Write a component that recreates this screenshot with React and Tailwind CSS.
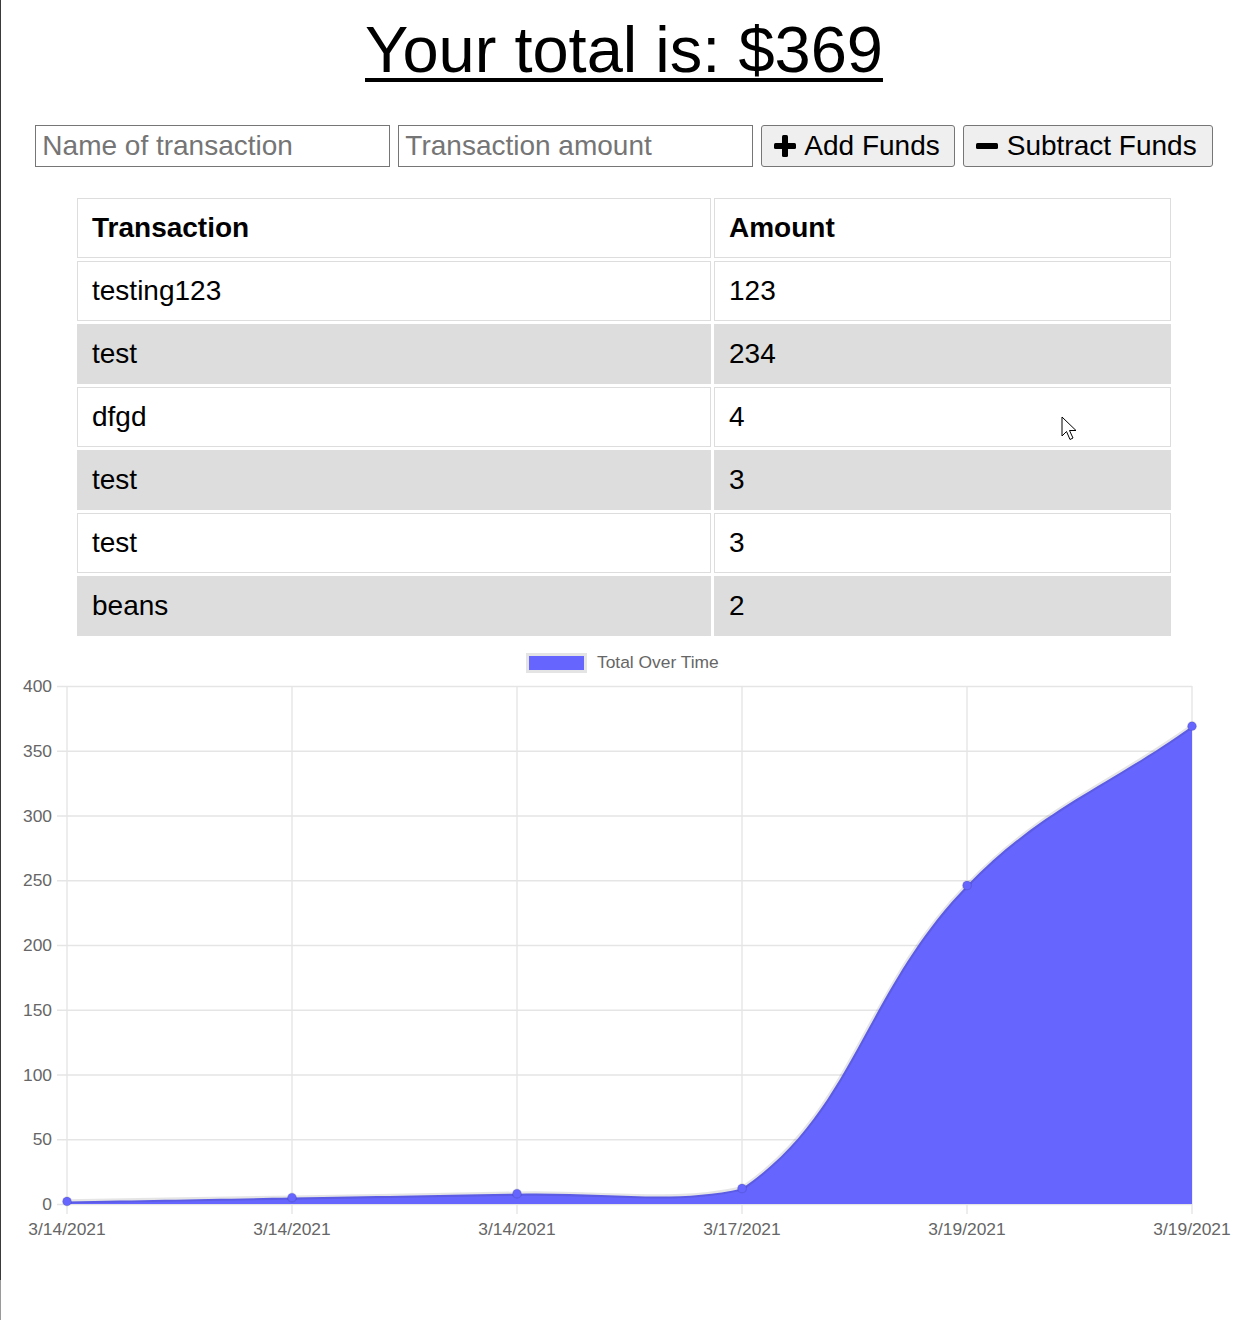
import React from 'react';

const font = { fontFamily: '"Liberation Sans", Arial, sans-serif' };

const rows = [
  { name: 'testing123', amount: 123 },
  { name: 'test', amount: 234 },
  { name: 'dfgd', amount: 4 },
  { name: 'test', amount: 3 },
  { name: 'test', amount: 3 },
  { name: 'beans', amount: 2 },
];

// chart geometry (page coords)
const LEFT = 67;
const RIGHT = 1192;
const TOP = 686;
const BOTTOM = 1204;
const xs = [67, 292, 517, 742, 967, 1192];
const labels = ['3/14/2021', '3/14/2021', '3/14/2021', '3/17/2021', '3/19/2021', '3/19/2021'];
const values = [2, 5, 8, 12, 246, 369];
const yTicks = [400, 350, 300, 250, 200, 150, 100, 50, 0];
const yFor = (v) => BOTTOM - (v * (BOTTOM - TOP)) / 400;

const clamp = (v, lo, hi) => Math.min(Math.max(v, lo), hi);

// chart.js style spline
function buildPath(pts, t = 0.4) {
  const cps = pts.map((m, i) => {
    const p = pts[i - 1] || m;
    const n = pts[i + 1] || m;
    const d01 = Math.hypot(m.x - p.x, m.y - p.y);
    const d12 = Math.hypot(n.x - m.x, n.y - m.y);
    let s01 = d01 / (d01 + d12);
    let s12 = d12 / (d01 + d12);
    if (isNaN(s01)) s01 = 0;
    if (isNaN(s12)) s12 = 0;
    const fa = t * s01;
    const fb = t * s12;
    return {
      prev: { x: clamp(m.x - fa * (n.x - p.x), LEFT, RIGHT), y: clamp(m.y - fa * (n.y - p.y), TOP, BOTTOM) },
      next: { x: clamp(m.x + fb * (n.x - p.x), LEFT, RIGHT), y: clamp(m.y + fb * (n.y - p.y), TOP, BOTTOM) },
    };
  });
  let d = `M ${pts[0].x} ${pts[0].y}`;
  for (let i = 1; i < pts.length; i++) {
    const a = cps[i - 1].next;
    const b = cps[i].prev;
    d += ` C ${a.x} ${a.y} ${b.x} ${b.y} ${pts[i].x} ${pts[i].y}`;
  }
  return d;
}

const PlusIcon = () => (
  <svg width="22" height="22" viewBox="0 0 22 22">
    <rect x="8" y="0" width="6" height="22" rx="1.5" fill="#000" />
    <rect x="0" y="8" width="22" height="6" rx="1.5" fill="#000" />
  </svg>
);

const MinusIcon = () => (
  <svg width="22" height="22" viewBox="0 0 22 22">
    <rect x="0" y="8" width="22" height="6" rx="1.5" fill="#000" />
  </svg>
);

const Chart = () => {
  const pts = xs.map((x, i) => ({ x, y: yFor(values[i]) }));
  const line = buildPath(pts);
  const area = `${line} L ${RIGHT} ${BOTTOM} L ${LEFT} ${BOTTOM} Z`;
  const grid = '#e5e5e5';
  const tickText = '#666';

  return (
    <svg width="1246" height="610" viewBox="1 639 1246 610" className="block" style={font}>
      {/* legend */}
      <rect x="527.5" y="654.5" width="58" height="17" fill="#6666ff" stroke="#e4e4e4" strokeWidth="3" />
      <text x="597" y="668" fontSize="17.4" fill={tickText}>Total Over Time</text>

      {/* horizontal grid + y ticks */}
      {yTicks.map((v) => (
        <g key={v}>
          <line x1="57" x2={RIGHT} y1={yFor(v) + 0.5} y2={yFor(v) + 0.5} stroke={grid} strokeWidth="1.4" />
          <text x="52" y={yFor(v) + 6} fontSize="17.4" fill={tickText} textAnchor="end">{v}</text>
        </g>
      ))}

      {/* vertical grid + x ticks */}
      {xs.map((x, i) => (
        <g key={i}>
          <line x1={x} x2={x} y1={TOP} y2={BOTTOM + 10} stroke={grid} strokeWidth="1.4" />
          <text x={x} y="1235" fontSize="17.4" fill={tickText} textAnchor="middle">{labels[i]}</text>
        </g>
      ))}

      <path d={area} fill="#6666ff" />
      <path d={line} fill="none" stroke="rgba(0,0,0,0.1)" strokeWidth="4.3" />
      {pts.map((p, i) => (
        <circle key={i} cx={p.x} cy={p.y} r="4.4" fill="#6666ff" stroke="rgba(0,0,0,0.1)" strokeWidth="1.4" />
      ))}
    </svg>
  );
};

const Cursor = () => (
  <svg width="20" height="28" viewBox="0 0 20 28" className="absolute left-[1060px] top-[416px]">
    <path d="M1 1 L1 20 L5.5 15.5 L9 23.5 L12 22 L8.5 14.5 L15 14.5 Z" fill="#fff" stroke="#000" strokeWidth="1" strokeLinejoin="round" />
  </svg>
);

export default function App() {
  return (
    <div className="flex min-h-[1320px] bg-white text-black" style={font}>
      <div className="flex w-px shrink-0 flex-col">
        <div className="h-[1280px] bg-[#3a3a3a]" />
        <div className="flex-1 bg-[#9a9a9a]" />
      </div>

      <div className="relative flex w-[1246px] flex-col">
        <h1 className="pt-[18px] text-center text-[65px] font-normal leading-[64px]">
          <span className="underline decoration-[4px] underline-offset-[6px]">Your total is: $369</span>
        </h1>

        <div className="mt-[43px] flex justify-center gap-[8px]">
          <input
            type="text"
            placeholder="Name of transaction"
            className="h-[42px] w-[355px] border border-[#767676] bg-white px-[6px] text-[28px] text-black outline-none placeholder:text-[#757575]"
          />
          <input
            type="number"
            placeholder="Transaction amount"
            className="h-[42px] w-[355px] border border-[#767676] bg-white px-[6px] text-[28px] text-black outline-none placeholder:text-[#757575]"
          />
          <button className="flex h-[42px] items-center gap-[8px] rounded-[3px] border border-[#767676] bg-[#efefef] pl-[12px] pr-[14px] text-[28px] text-black">
            <PlusIcon />
            Add Funds
          </button>
          <button className="flex h-[42px] items-center gap-[9px] rounded-[3px] border border-[#767676] bg-[#efefef] pl-[12px] pr-[15px] text-[28px] text-black">
            <MinusIcon />
            Subtract Funds
          </button>
        </div>

        <table className="mx-auto mt-[28px] w-[1100px] table-fixed border-separate border-spacing-[3px] text-left text-[28px]">
          <thead>
            <tr>
              <th className="h-[60px] w-[634px] border border-[#dddddd] px-[14px] font-bold">Transaction</th>
              <th className="h-[60px] border border-[#dddddd] px-[14px] font-bold">Amount</th>
            </tr>
          </thead>
          <tbody>
            {rows.map((r, i) => (
              <tr key={i} className={i % 2 === 1 ? 'bg-[#dddddd]' : 'bg-white'}>
                <td className="h-[60px] border border-[#dddddd] px-[14px]">{r.name}</td>
                <td className="h-[60px] border border-[#dddddd] px-[14px]">{r.amount}</td>
              </tr>
            ))}
          </tbody>
        </table>

        <Chart />
        <Cursor />
      </div>
    </div>
  );
}
